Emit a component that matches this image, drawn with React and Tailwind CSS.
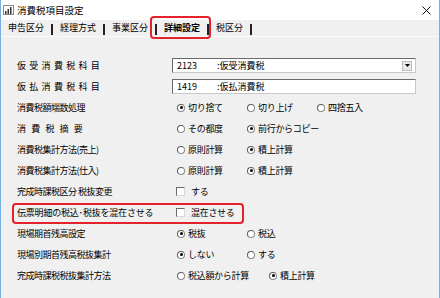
import React from 'react'

const jp = "font-['Noto_Sans_CJK_JP','Noto_Sans_CJK_SC',sans-serif]"

function Radio({ label, checked, w = 'w-[70px]' }) {
  return (
    <div className={`flex items-center shrink-0 whitespace-nowrap ${w}`}>
      <span className="w-[8px] h-[8px] shrink-0 rounded-full bg-white border border-[#8a8a8a] border-t-[#5c5c5c] border-l-[#5c5c5c] flex items-center justify-center">
        {checked && <span className="w-[3px] h-[3px] rounded-full bg-black" />}
      </span>
      <span className="ml-[3px] tracking-[-0.3px]">{label}</span>
    </div>
  )
}

function Check({ label }) {
  return (
    <div className="flex items-center ml-[4px] whitespace-nowrap">
      <span className="w-[9px] h-[9px] bg-white border border-[#d8d8d8] border-t-[#6a6a6a] border-l-[#6a6a6a]" />
      <span className="ml-[6px] tracking-[-0.3px]">{label}</span>
    </div>
  )
}

function Row({ label, labelClass = 'tracking-[-0.5px]', children }) {
  return (
    <div className="h-[21px] flex items-center">
      <div className={`w-[171px] shrink-0 pl-[16px] whitespace-nowrap ${labelClass}`}>{label}</div>
      {children}
    </div>
  )
}

function Field({ code, name, combo }) {
  return (
    <div className="w-[244px] h-[15px] bg-white border border-[#c8c8c8] border-t-[#6a6a6a] border-l-[#6a6a6a] flex items-center text-[9px]">
      <span className="w-[44px] pl-[4px] shrink-0">{code}</span>
      <span>:{name}</span>
      {combo && (
        <span className="ml-auto mr-[3px] w-[10px] h-[10px] bg-[#e8e8e8] border border-[#bdbdbd] flex items-center justify-center">
          <svg width="5" height="3" viewBox="0 0 5 3"><path d="M0 0h5L2.5 3z" fill="#000" /></svg>
        </span>
      )}
    </div>
  )
}

const tabs = ['申告区分', '経理方式', '事業区分', '詳細設定', '税区分']

export default function App() {
  return (
    <div className={`relative w-[440px] h-[298px] overflow-hidden bg-[#f0f0f0] border-x border-[#76afe6] text-black text-[9px] ${jp}`}>
      {/* title bar */}
      <div className="h-[20px] bg-white flex items-center pl-[2px] pr-[8px]">
        <svg width="11" height="10" viewBox="0 0 11 10">
          <rect x="0.5" y="0.5" width="10" height="9" fill="#fff" stroke="#8a8a8a" />
          <rect x="2" y="6" width="1.5" height="3" fill="#333" />
          <rect x="4.5" y="4" width="1.5" height="5" fill="#333" />
          <rect x="7" y="2" width="1.5" height="7" fill="#333" />
        </svg>
        <span className="ml-[3px] text-[9.5px]">消費税項目設定</span>
        <svg className="ml-auto" width="9" height="9" viewBox="0 0 9 9">
          <path d="M0.5 0.5l8 8M8.5 0.5l-8 8" stroke="#111" strokeWidth="1" />
        </svg>
      </div>

      {/* tabs */}
      <div className="h-[17px] flex items-center pl-[7px] gap-[7px] border-b border-[#fafafa]">
        {tabs.map(t => (
          <React.Fragment key={t}>
            <span className={t === '詳細設定' ? 'font-bold' : ''}>{t}</span>
            <span className="w-[2px] h-[11px] mt-[2px] bg-[#222]" />
          </React.Fragment>
        ))}
      </div>

      {/* body */}
      <div className="pt-[18px]">
        <Row label="仮受消費税科目" labelClass="tracking-[3.3px]">
          <Field code="2123" name="仮受消費税" combo />
        </Row>
        <Row label="仮払消費税科目" labelClass="tracking-[3.3px]">
          <Field code="1419" name="仮払消費税" />
        </Row>
        <Row label="消費税額端数処理">
          <div className="flex ml-[5px]">
            <Radio label="切り捨て" checked />
            <Radio label="切り上げ" />
            <Radio label="四捨五入" />
          </div>
        </Row>
        <Row label="消費税摘要" labelClass="tracking-[5.2px]">
          <div className="flex ml-[5px]">
            <Radio label="その都度" />
            <Radio label="前行からコピー" checked />
          </div>
        </Row>
        <Row label="消費税集計方法(売上)">
          <div className="flex ml-[5px]">
            <Radio label="原則計算" />
            <Radio label="積上計算" checked />
          </div>
        </Row>
        <Row label="消費税集計方法(仕入)">
          <div className="flex ml-[5px]">
            <Radio label="原則計算" />
            <Radio label="積上計算" checked />
          </div>
        </Row>
        <Row label="完成時課税区分 税抜変更">
          <Check label="する" />
        </Row>
        <Row label="伝票明細の税込･税抜を混在させる" labelClass="tracking-[-0.2px]">
          <Check label="混在させる" />
        </Row>
        <Row label="現場期首残高設定">
          <div className="flex ml-[5px]">
            <Radio label="税抜" checked />
            <Radio label="税込" />
          </div>
        </Row>
        <Row label="現場別期首残高税抜集計">
          <div className="flex ml-[5px]">
            <Radio label="しない" checked />
            <Radio label="する" />
          </div>
        </Row>
        <Row label="完成時課税税抜集計方法">
          <div className="flex ml-[5px]">
            <Radio label="税込額から計算" w="w-[92px]" />
            <Radio label="積上計算" checked />
          </div>
        </Row>
      </div>

      {/* highlight annotations */}
      <div className="absolute left-[149px] top-[16px] w-[61px] h-[23px] border-2 border-[#e3222b] rounded-[4px]" />
      <div className="absolute left-[11px] top-[203px] w-[232px] h-[21px] border-2 border-[#e3222b] rounded-[4px]" />
    </div>
  )
}
